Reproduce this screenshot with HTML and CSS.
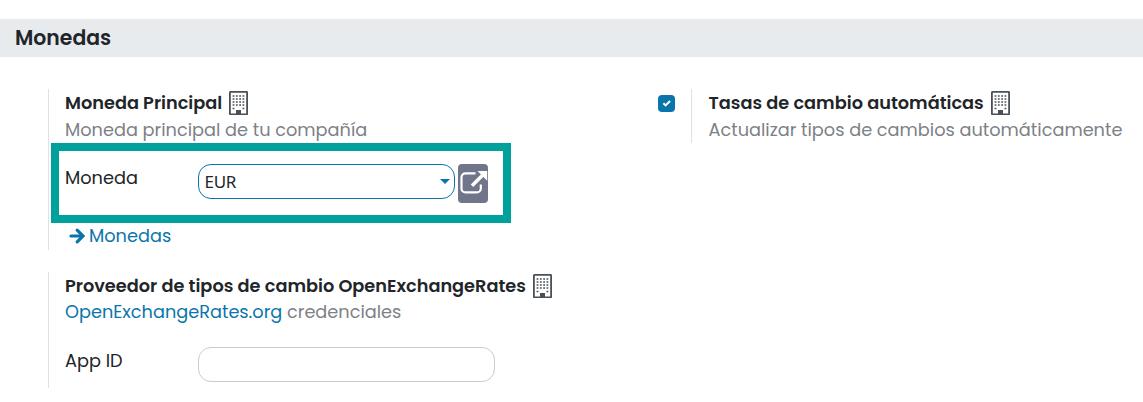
FILE: index.html
```html
<!DOCTYPE html>
<html lang="es">
<head>
<meta charset="utf-8">
<title>Monedas</title>
<link rel="stylesheet" href="styles.css">
</head>
<body>
<svg width="0" height="0" class="defs">
  <symbol id="building" viewBox="0 0 19 24">
    <rect x=".9" y=".9" width="17.2" height="22.4" rx=".4" fill="none" stroke="#495057" stroke-width="1.8"/>
    <path d="M3.6 5h12M3.6 8h12M3.6 11h12M3.6 14h12" stroke="#495057" stroke-width="1.7" stroke-dasharray="1.8 1.5"/>
    <path d="M3.6 17.5h1.8M13.5 17.5h1.8" stroke="#495057" stroke-width="1.7"/>
    <path d="M7 19h5v4H7z" fill="#495057"/>
  </symbol>
</svg>
<h2 class="section-title">Monedas</h2>
<main class="settings">
  <div class="column">
    <section class="setting setting-main">
      <h3 class="title"><span>Moneda Principal</span><svg class="building"><use href="#building"/></svg></h3>
      <p class="desc">Moneda principal de tu compañía</p>
      <div class="highlight">
        <label class="label">Moneda</label>
        <div class="select"><span>EUR</span><i class="caret"></i></div>
        <button class="open" aria-label="Abrir"><svg width="30" height="39" viewBox="0 0 30 39" fill="none" stroke="#fff">
          <path d="M17.5 9.4H7.5a4 4 0 0 0-4 4v11a4 4 0 0 0 4 4h11.3a4 4 0 0 0 4-4V20.5" stroke-width="2.2"/>
          <path d="M14 21.8 24.5 11.3" stroke-width="3.6"/>
          <path d="M19.5 7h9.7v9.7z" fill="#fff" stroke="none"/>
        </svg></button>
      </div>
      <a class="link"><svg width="16" height="16" viewBox="0 0 16 16" fill="none" stroke="#0a75ab" stroke-linecap="round"><path d="M2 8h10" stroke-width="3.2"/><path d="M8.2 2.2 14 8l-5.8 5.8" stroke-width="3.2"/></svg><span>Monedas</span></a>
    </section>
    <section class="setting setting-provider">
      <h3 class="title"><span>Proveedor de tipos de cambio OpenExchangeRates</span><svg class="building"><use href="#building"/></svg></h3>
      <p class="desc desc-provider"><a>OpenExchangeRates.org</a> credenciales</p>
      <div class="field">
        <label class="label">App ID</label>
        <div class="input"></div>
      </div>
    </section>
  </div>
  <div class="column column-right">
    <span class="check"><svg width="17" height="17" viewBox="0 0 17 17" fill="none" stroke="#fff" stroke-width="2"><path d="m5.4 8.2 2.2 2.2 4.5-4.4"/></svg></span>
    <section class="setting setting-auto">
      <h3 class="title"><span>Tasas de cambio automáticas</span><svg class="building"><use href="#building"/></svg></h3>
      <p class="desc">Actualizar tipos de cambios automáticamente</p>
    </section>
  </div>
</main>
</body>
</html>
```
FILE: styles.css
```css
* { box-sizing: border-box; }
body { margin: 0; padding-top: 19px; height: 402px; overflow: hidden; background: #fff; color: #212529; font: 17.73px/26px Poppins, Inter, sans-serif; white-space: nowrap; }
h2, h3, p { margin: 0; }
.defs { position: absolute; }
.section-title { height: 38px; padding-left: 15px; background: #e7ebee; font-size: 20.4px; line-height: 38px; font-weight: 600; }
.settings { display: grid; grid-template-columns: 610px 1fr; padding: 32px 0 0 48px; }
.column { display: flex; flex-direction: column; gap: 22px; }
.column-right { flex-direction: row; align-items: flex-start; gap: 16px; }
.setting { border-left: 1px solid #dee2e6; padding-left: 16px; }
.setting-main { height: 161px; }
.setting-provider { height: 116px; }
.setting-auto { height: 54px; padding-left: 16.5px; }
.title { display: flex; align-items: center; gap: 7px; height: 28px; font-size: 17.73px; font-weight: 600; }
.building { width: 19px; height: 24px; }
.desc { height: 26px; color: #7c8186; }
.desc-provider { line-height: 24px; }
.desc a, .link { color: #0a75ab; }
.highlight { display: flex; align-items: flex-start; width: 460px; height: 80px; margin-left: -14px; border: 8px solid #00a09d; padding: 13px 0 0 6px; }
.label { width: 133px; line-height: 28px; }
.select { display: flex; align-items: center; justify-content: space-between; width: 257px; height: 35px; padding: 0 4px 0 5.5px; border: 1px solid #0a75ab; border-radius: 13px; font: 17px/33px "Noto Sans", sans-serif; letter-spacing: -.3px; }
.caret { border: 5px solid transparent; border-top-color: #0a75ab; border-bottom: 0; }
.open { width: 30px; height: 39px; margin-left: 3px; padding: 0; border: 0; border-radius: 4px; background: #71758b; }
.open svg { display: block; }
.link { display: flex; align-items: center; gap: 4px; height: 26px; padding-left: 4px; }
.field { display: flex; margin-top: 21px; }
.input { width: 297px; height: 35px; border: 1px solid #c9cbcd; border-radius: 13px; }
.check { width: 17px; height: 17px; margin-top: 6px; border-radius: 4px; background: #0a75ab; }
.check svg { display: block; }
```
